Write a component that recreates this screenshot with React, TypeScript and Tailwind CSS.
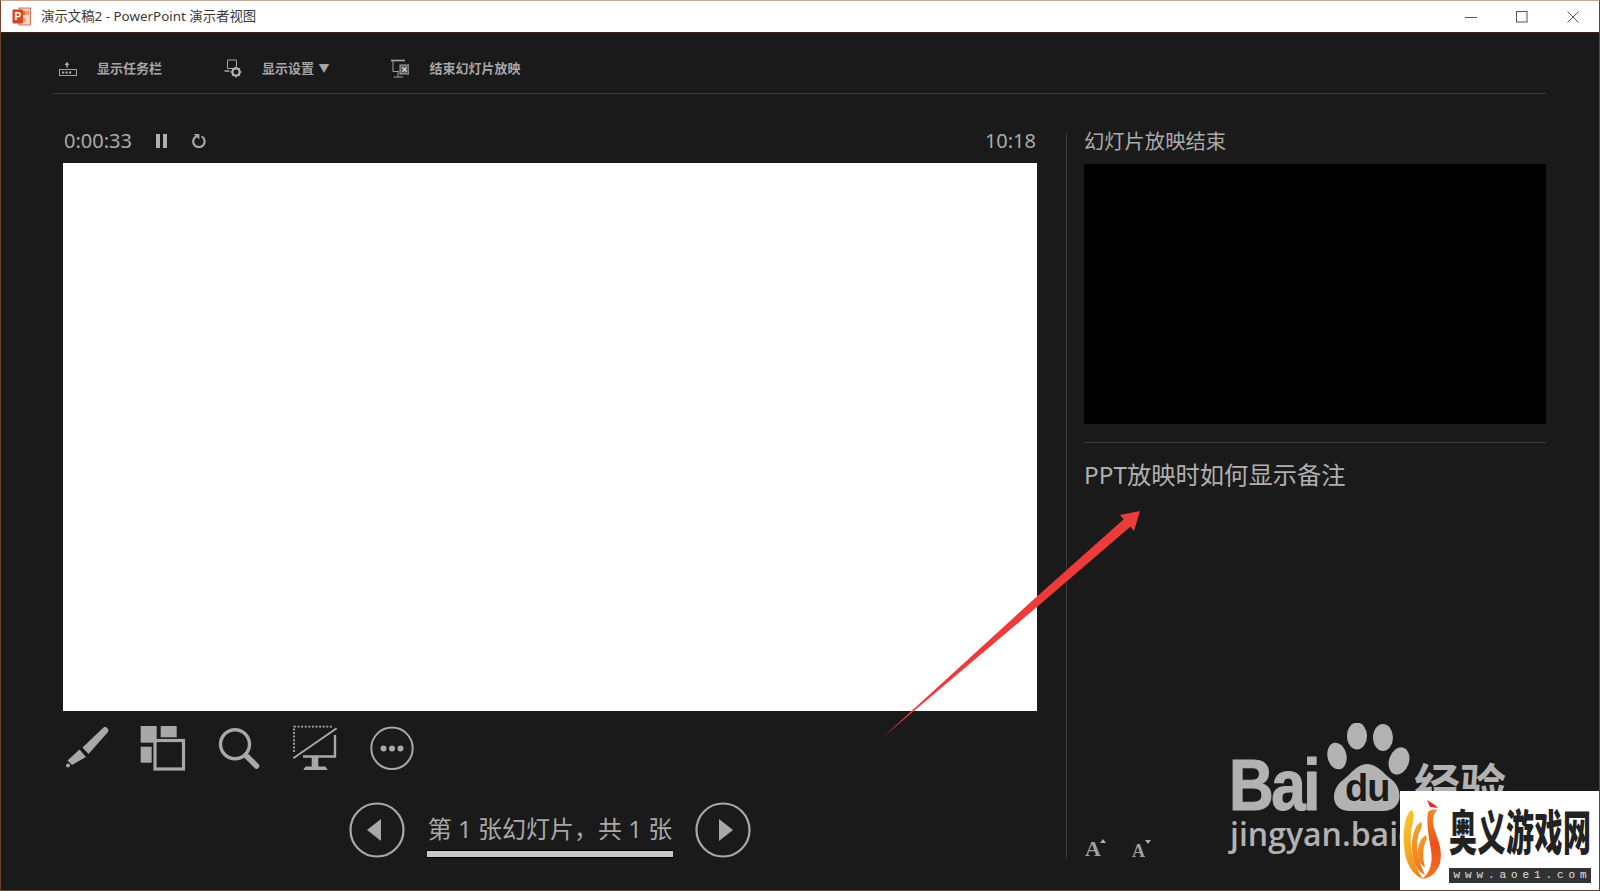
import React from "react";

const cjk = "font-['Noto_Sans','Noto_Sans_CJK_SC',sans-serif]";

const TaskbarIcon = () => (
  <svg width="18" height="18" viewBox="0 0 18 18" fill="none" className="shrink-0">
    <path d="M8 2 L5.5 5 H7.2 V7.5 H8.8 V5 H10.5 Z" fill="#b0b0b0" />
    <rect x="0.5" y="9.5" width="17" height="6" stroke="#a0a0a0" />
    <rect x="3" y="11.5" width="2.2" height="2" fill="#b0b0b0" />
    <rect x="6.5" y="11.5" width="2.2" height="2" fill="#b0b0b0" />
    <rect x="10" y="11.5" width="2.2" height="2" fill="#b0b0b0" />
  </svg>
);

const DisplayIcon = () => (
  <svg width="18" height="20" viewBox="0 0 18 20" fill="none" className="shrink-0">
    <path d="M9 9.5 H3.5 V1 H12.5 V7" stroke="#a8a8a8" />
    <path d="M0.5 12 H5.5" stroke="#a8a8a8" strokeWidth="1.5" />
    <circle cx="12" cy="13" r="3.6" stroke="#b4b4b4" strokeWidth="2.2" />
    <path d="M12 7.6 V9.4 M12 16.6 V18.4 M6.6 13 H8.4 M15.6 13 H17.4 M8.2 9.2 L9.4 10.4 M14.6 15.6 L15.8 16.8 M15.8 9.2 L14.6 10.4 M9.4 15.6 L8.2 16.8" stroke="#b4b4b4" strokeWidth="1.6" />
  </svg>
);

const EndShowIcon = () => (
  <svg width="18" height="20" viewBox="0 0 18 20" fill="none" className="shrink-0">
    <path d="M0 1.5 H14" stroke="#a8a8a8" strokeWidth="1.6" />
    <path d="M2 1.5 V12.5 H8 M7 12.5 V18 M2.5 18 H12" stroke="#a0a0a0" />
    <rect x="9" y="6" width="9" height="9" fill="#5a5a5a" stroke="#a8a8a8" />
    <path d="M11.3 8.3 L15.7 12.7 M15.7 8.3 L11.3 12.7" stroke="#d0d0d0" strokeWidth="1.4" />
  </svg>
);

const ReloadIcon = () => (
  <svg width="14" height="14" viewBox="0 0 14 14" fill="none">
    <path d="M9.6 2.4 A5.7 5.7 0 1 1 4.6 2.2" stroke="#a6a6a6" strokeWidth="2.2" />
    <path d="M1.8 0 H7.4 V5.6 Z" fill="#a6a6a6" />
  </svg>
);

const PenIcon = () => (
  <svg width="46" height="46" viewBox="0 0 46 46" className="shrink-0">
    <path d="M18.5 22.5 L39.5 2.5 C42 1 45.5 4 44 7 L24.5 29 Z" fill="#a8a8a8" />
    <path d="M15.5 24.5 L22 32 L8 40 L3.5 35.5 Z" fill="#a8a8a8" />
    <circle cx="4" cy="40.6" r="2" fill="#a8a8a8" />
  </svg>
);

const TilesIcon = () => (
  <svg width="46" height="46" viewBox="0 0 46 46" className="shrink-0">
    <rect x="0.7" y="1" width="16" height="16.7" fill="#a8a8a8" />
    <rect x="20.7" y="1" width="16" height="11.3" fill="#a8a8a8" />
    <rect x="0.7" y="21.7" width="11" height="16" fill="#a8a8a8" />
    <rect x="15" y="15.5" width="28.5" height="28.5" fill="none" stroke="#a8a8a8" strokeWidth="3.2" />
  </svg>
);

const SearchIcon = () => (
  <svg width="46" height="46" viewBox="0 0 46 46" fill="none" className="shrink-0">
    <circle cx="19" cy="19.3" r="14.5" stroke="#a8a8a8" strokeWidth="3.4" />
    <path d="M30 30.5 L40.5 41" stroke="#a8a8a8" strokeWidth="5.5" strokeLinecap="round" />
  </svg>
);

const MonitorIcon = () => (
  <svg width="46" height="46" viewBox="0 0 46 46" fill="none" className="shrink-0">
    <path d="M2 27 V1.7 H41" stroke="#a8a8a8" strokeWidth="1.8" strokeDasharray="2 1.6" />
    <path d="M1.3 33.3 L44.7 3.3" stroke="#a8a8a8" strokeWidth="2" />
    <path d="M43 10 V31.5 H11" stroke="#a8a8a8" strokeWidth="2.4" />
    <path d="M19.7 32 H26.3 V41.5 H33.5 L35.7 45 H11.3 L13.5 41.5 H19.7 Z" fill="#a8a8a8" />
  </svg>
);

const MoreIcon = () => (
  <svg width="46" height="46" viewBox="0 0 46 46" fill="none" className="shrink-0">
    <circle cx="24" cy="23.3" r="20.7" stroke="#a8a8a8" strokeWidth="2" />
    <circle cx="15.5" cy="23.5" r="3" fill="#a8a8a8" />
    <circle cx="24" cy="23.5" r="3" fill="#a8a8a8" />
    <circle cx="32.5" cy="23.5" r="3" fill="#a8a8a8" />
  </svg>
);

const NavButton = ({ dir }: { dir: "prev" | "next" }) => (
  <svg width="56" height="56" viewBox="0 0 56 56" fill="none" className="shrink-0">
    <circle cx="28" cy="28" r="26.5" stroke="#a8a8a8" strokeWidth="2.2" />
    {dir === "prev" ? (
      <path d="M18 28 L32 17 V39 Z" fill="#a8a8a8" />
    ) : (
      <path d="M24 17 L38 28 L24 39 Z" fill="#a8a8a8" />
    )}
  </svg>
);

const FlameLogo = () => (
  <svg width="50" height="90" viewBox="0 0 50 90" className="shrink-0">
    <defs>
      <linearGradient id="fy" x1="0" y1="0" x2="0.5" y2="1">
        <stop offset="0" stopColor="#f7d02c" />
        <stop offset="1" stopColor="#f08a1e" />
      </linearGradient>
      <linearGradient id="fo" x1="0" y1="0" x2="0.3" y2="1">
        <stop offset="0" stopColor="#f6a52a" />
        <stop offset="1" stopColor="#ee7a1c" />
      </linearGradient>
      <linearGradient id="fr" x1="0" y1="0" x2="0" y2="1">
        <stop offset="0" stopColor="#f28a26" />
        <stop offset="0.5" stopColor="#ee4f1c" />
        <stop offset="1" stopColor="#f0761e" />
      </linearGradient>
    </defs>
    <path d="M12 15 C5 18 3 35 4 50 C5 68 12 80 23 84 C15 72 9 55 11 38 C12 28 16 20 12 15 Z" fill="url(#fy)" />
    <path d="M21 27 C15 30 11 42 12 55 C13 68 18 77 25 80 C20 70 15 55 18 42 C19 36 24 31 21 27 Z" fill="url(#fo)" />
    <path d="M26 40 C20 43 17 52 18 60 C19 68 22 71 25 72 C22 62 23 50 27 44 Z" fill="url(#fo)" />
    <path d="M28 17 C32 13 37 15 37 15 C33 20 32 25 34 33 C38 45 43 55 40 68 C37 78 30 83 22 84 C30 78 33 68 31 55 C29 42 26 28 28 17 Z" fill="url(#fr)" />
    <path d="M27 5 L35 10 L38 13 L30 12 Z" fill="#e0301c" />
  </svg>
);

export default function App() {
  return (
    <div className={`relative w-[1600px] h-[891px] overflow-hidden flex flex-col border border-[#6b3f28] border-t-[#c9a68c] bg-[#1a1a1a] ${cjk}`}>
      {/* title bar */}
      <div className="h-[31px] shrink-0 bg-white flex items-center pl-[11px] border-b border-[#3c2418] box-content">
        <svg width="19" height="19" viewBox="0 0 19 19" className="shrink-0">
          <rect x="7" y="1" width="11.5" height="17" fill="#f3d3c6" stroke="#c9573a" strokeWidth="0.8" />
          <rect x="10" y="4" width="3.5" height="4" fill="#d9663f" />
          <rect x="14" y="4" width="3" height="4" fill="#e39a7c" />
          <rect x="10" y="11" width="3.5" height="4" fill="#e39a7c" />
          <rect x="0.5" y="2.5" width="10.5" height="14" rx="1" fill="#d24726" />
          <text x="2.4" y="13" fontSize="10" fontWeight="700" fill="#ffffff" fontFamily="'Liberation Sans', sans-serif">P</text>
        </svg>
        <span className="ml-[10px] text-[13.4px] leading-none text-[#3a3a3a]">演示文稿2 - PowerPoint 演示者视图</span>
        <div className="ml-auto flex items-center pr-[20px] gap-[39px]">
          <svg width="12" height="12" viewBox="0 0 12 12" fill="none"><path d="M0 6.5 H12" stroke="#555" strokeWidth="1" /></svg>
          <svg width="12" height="12" viewBox="0 0 12 12" fill="none"><rect x="0.5" y="0.5" width="10.5" height="10.5" stroke="#555" /></svg>
          <svg width="12" height="12" viewBox="0 0 12 12" fill="none"><path d="M0.5 0.5 L11.5 11.5 M11.5 0.5 L0.5 11.5" stroke="#555" strokeWidth="1" /></svg>
        </div>
      </div>

      {/* toolbar */}
      <div className="h-[61px] shrink-0 ml-[52px] mr-[53px] pl-[6px] pt-[12px] border-b border-[#3d3d3d] flex items-center text-[13px] font-bold text-[#a6a6a6]">
        <div className="flex items-center gap-[20px]">
          <TaskbarIcon />
          <span>显示任务栏</span>
        </div>
        <div className="flex items-center gap-[20px] ml-[62px]">
          <DisplayIcon />
          <span>
            显示设置 <span className="ml-px text-[11px]">▼</span>
          </span>
        </div>
        <div className="flex items-center gap-[20px] ml-[62px]">
          <EndShowIcon />
          <span>结束幻灯片放映</span>
        </div>
      </div>

      {/* presenter area */}
      <div className="flex pl-[62px] pt-[39px]">
        <div className="w-[974px] shrink-0">
          <div className="h-[30px] pb-[14px] px-px flex items-center text-[20px] text-[#aaaaaa]">
            <span>0:00:33</span>
            <div className="ml-[24px] flex gap-[3px]">
              <div className="w-[4px] h-[14px] bg-[#b0b0b0]" />
              <div className="w-[4px] h-[14px] bg-[#b0b0b0]" />
            </div>
            <div className="ml-[25px]">
              <ReloadIcon />
            </div>
            <span className="ml-auto">10:18</span>
          </div>
          <div className="h-[548px] bg-white" />
          <div className="mt-[14px] ml-px flex gap-[30px]">
            <PenIcon />
            <TilesIcon />
            <SearchIcon />
            <MonitorIcon />
            <MoreIcon />
          </div>
          <div className="mt-[31px] ml-[286px] flex gap-[22px]">
            <NavButton dir="prev" />
            <div className="w-[246px] h-[56px] flex flex-col items-center">
              <span className="mt-[11px] text-[24px] leading-[32px] whitespace-nowrap text-[#a8a8a8]">{"第 1 张幻灯片\uFF0C共 1 张"}</span>
              <div className="mt-[5px] w-full h-[8px] bg-[#c8c8c8] border-y border-black" />
            </div>
            <NavButton dir="next" />
          </div>
        </div>

        <div className="ml-[29px] w-[481px] h-[725px] border-l border-[#3d3d3d] pl-[17px] flex flex-col">
          <div className="h-[31px] text-[20.3px] leading-[17px] text-[#aaaaaa]">幻灯片放映结束</div>
          <div className="h-[260px] w-[462px] bg-black" />
          <div className="mt-[18px] w-[462px] border-t border-[#3d3d3d]" />
          <div className="mt-[20px] text-[24.3px] leading-[24px] text-[#b0b0b0]">PPT放映时如何显示备注</div>
          <div className="mt-auto pl-px flex items-end gap-[27px] text-[#a0a0a0] font-['Liberation_Serif',serif] font-bold leading-none">
            <div className="relative text-[22px] h-[18px] w-[20px] flex items-end">
              <span className="leading-[18px]">A</span>
              <svg width="6" height="4" viewBox="0 0 6 4" className="absolute -top-[1px] right-[-1px]"><path d="M3 0 L6 4 H0 Z" fill="#b0b0b0" /></svg>
            </div>
            <div className="relative text-[18px] h-[16px] w-[18px] flex items-end">
              <span className="leading-[14px]">A</span>
              <svg width="6" height="4" viewBox="0 0 6 4" className="absolute -top-[2px] right-[-1px]"><path d="M0 0 H6 L3 4 Z" fill="#b0b0b0" /></svg>
            </div>
          </div>
        </div>
      </div>

      {/* baidu watermark */}
      <div className="absolute left-[1228px] top-[765px] text-[62px] leading-[46px] font-bold text-[#b2b2b2] tracking-[-2.5px] origin-bottom scale-y-[1.15] [-webkit-text-stroke:1px_#b2b2b2] font-['Liberation_Sans',sans-serif]">Bai</div>
      <svg width="90" height="90" viewBox="0 0 90 90" className="absolute left-[1322px] top-[722px]">
        <ellipse cx="34" cy="13" rx="10" ry="13.5" fill="#b2b2b2" />
        <ellipse cx="60" cy="14.5" rx="10" ry="13.5" fill="#b2b2b2" />
        <ellipse cx="14" cy="33" rx="9.5" ry="13.5" fill="#b2b2b2" transform="rotate(-12 14 33)" />
        <ellipse cx="76" cy="38" rx="10" ry="14" fill="#b2b2b2" transform="rotate(18 76 38)" />
        <path d="M44 41 C54 41 60 50 68 56 C81 66 80 88 60 88 H27 C7 88 7 66 20 57 C28 51 34 41 44 41 Z" fill="#b2b2b2" />
      </svg>
      <div className="absolute left-[1344px] top-[764px] text-[38px] leading-[46px] tracking-[-1px] font-bold text-[#1a1a1a] font-['Liberation_Sans',sans-serif]">du</div>
      <div className="absolute left-[1413px] top-[765px] text-[46px] leading-[36px] font-bold text-[#b2b2b2]">经验</div>
      <div className="absolute left-[1229px] top-[815px] text-[32px] leading-[36px] font-semibold text-[#b2b2b2] font-['Open_Sans',sans-serif]">jingyan.baidu</div>

      {/* site badge */}
      <div className="absolute left-[1399px] top-[790px] w-[200px] h-[100px] bg-white flex items-start">
        <div className="mt-[4px] shrink-0">
          <FlameLogo />
        </div>
        <div className="mt-[10px] ml-[-1px] w-[142px]">
          <div className="h-[58px] flex items-center justify-between">
            {["奥", "义", "游", "戏", "网"].map((c) => (
              <span key={c} className="text-[28px] leading-none font-black text-[#222222] origin-center scale-y-[1.7] font-['Noto_Sans_CJK_SC',sans-serif]">{c}</span>
            ))}
          </div>
          <div className="mt-[9px] h-[15px] bg-[#333333] text-[#e0e0e0] text-[11px] leading-[15px] font-['Liberation_Mono',monospace] flex justify-around px-[2px]">
            {"www.aoe1.com".split("").map((c, i) => (
              <span key={i}>{c}</span>
            ))}
          </div>
        </div>
      </div>

      {/* red annotation arrow */}
      <svg width="1600" height="891" viewBox="0 0 1600 891" className="absolute left-[-1px] top-[-1px] pointer-events-none">
        <path d="M882 738 L1034.4 598.8 L1123.7 519.2 L1120 515 L1140 511 L1134 531 L1130.3 526.8 L1039.6 604.8 Z" fill="#ec3b3b" />
      </svg>
    </div>
  );
}
